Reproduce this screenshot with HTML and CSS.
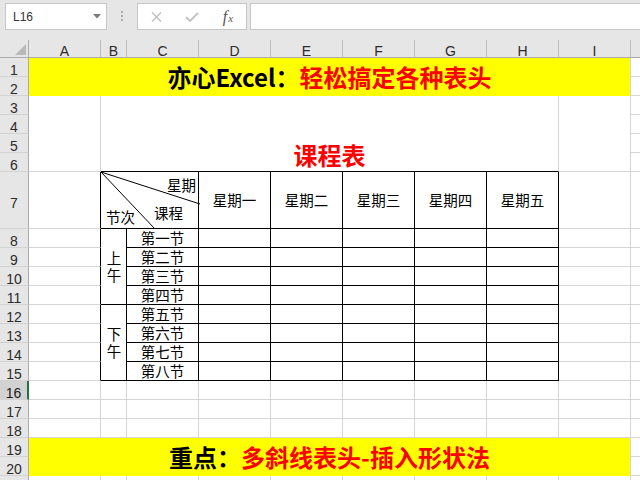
FILE: index.html
```html
<!DOCTYPE html>
<html lang="zh">
<head>
<meta charset="utf-8">
<title>课程表</title>
<link rel="stylesheet" href="styles.css">
</head>
<body>
<div class="fbar">
  <div class="namebox"><span>L16</span><svg class="dd" width="8" height="5" viewBox="0 0 8 5"><polygon points="0,0 8,0 4,4.5" fill="#7a7a7a"/></svg></div>
  <div class="grip"><svg width="3" height="12" viewBox="0 0 3 12"><rect x="0" y="0" width="2" height="2" fill="#ababab"/><rect x="0" y="4" width="2" height="2" fill="#ababab"/><rect x="0" y="8" width="2" height="2" fill="#ababab"/></svg></div>
  <div class="btns">
    <span class="slot"><svg width="11" height="10" viewBox="0 0 11 10"><path d="M1 0.5 L10 9.5 M10 0.5 L1 9.5" stroke="#bdbdbd" stroke-width="1.3" fill="none"/></svg></span>
    <span class="slot"><svg width="14" height="10" viewBox="0 0 14 10"><path d="M1 5 L5 9 L13 1" stroke="#c4c4c4" stroke-width="2" fill="none"/></svg></span>
    <span class="slot fx"><i class="f">f</i><i class="x">x</i></span>
  </div>
  <div class="input"></div>
</div>
<div class="sheet">
  <div class="corner"><svg width="28" height="17" viewBox="0 0 28 17"><polygon points="15,15 26,15 26,4" fill="#b9b9b9"/></svg></div>
  <div class="ch">A</div><div class="ch">B</div><div class="ch">C</div><div class="ch">D</div><div class="ch">E</div><div class="ch">F</div><div class="ch">G</div><div class="ch">H</div><div class="ch">I</div><div class="ch"></div>

  <div class="rh">1</div><div class="title"><span class="k">亦心Excel：</span><span class="r">轻松搞定各种表头</span></div><div class="c"></div>
  <div class="rh">2</div><div class="c"></div>

  <div class="rh">3</div><div class="c m4"></div><div class="caption">课程表</div><div class="c m4"></div><div class="c"></div>
  <div class="rh">4</div><div class="c"></div>
  <div class="rh">5</div><div class="c"></div>
  <div class="rh">6</div><div class="c"></div>

  <div class="rh">7</div><div class="c ar"></div>
  <div class="tb diag">
    <svg class="lines" width="98" height="57" viewBox="0 0 98 57"><line x1="0" y1="0" x2="99" y2="32" stroke="#000" stroke-width="1"/><line x1="0" y1="0" x2="54" y2="57" stroke="#000" stroke-width="1"/></svg>
    <span class="dtop">星期</span>
    <div class="dbot"><span class="jc">节次</span><span class="kc">课程</span></div>
  </div>
  <div class="tb">星期一</div><div class="tb">星期二</div><div class="tb">星期三</div><div class="tb">星期四</div><div class="tb">星期五</div><div class="c"></div><div class="c"></div>

  <div class="rh">8</div><div class="c ar"></div><div class="tb m4"><span class="vt">上午</span></div><div class="tb">第一节</div><div class="tb"></div><div class="tb"></div><div class="tb"></div><div class="tb"></div><div class="tb"></div><div class="c"></div><div class="c"></div>
  <div class="rh">9</div><div class="c ar"></div><div class="tb">第二节</div><div class="tb"></div><div class="tb"></div><div class="tb"></div><div class="tb"></div><div class="tb"></div><div class="c"></div><div class="c"></div>
  <div class="rh">10</div><div class="c ar"></div><div class="tb">第三节</div><div class="tb"></div><div class="tb"></div><div class="tb"></div><div class="tb"></div><div class="tb"></div><div class="c"></div><div class="c"></div>
  <div class="rh">11</div><div class="c ar"></div><div class="tb">第四节</div><div class="tb"></div><div class="tb"></div><div class="tb"></div><div class="tb"></div><div class="tb"></div><div class="c"></div><div class="c"></div>
  <div class="rh">12</div><div class="c ar"></div><div class="tb m4"><span class="vt">下午</span></div><div class="tb">第五节</div><div class="tb"></div><div class="tb"></div><div class="tb"></div><div class="tb"></div><div class="tb"></div><div class="c"></div><div class="c"></div>
  <div class="rh">13</div><div class="c ar"></div><div class="tb">第六节</div><div class="tb"></div><div class="tb"></div><div class="tb"></div><div class="tb"></div><div class="tb"></div><div class="c"></div><div class="c"></div>
  <div class="rh">14</div><div class="c ar"></div><div class="tb">第七节</div><div class="tb"></div><div class="tb"></div><div class="tb"></div><div class="tb"></div><div class="tb"></div><div class="c"></div><div class="c"></div>
  <div class="rh">15</div><div class="c ar"></div><div class="tb">第八节</div><div class="tb"></div><div class="tb"></div><div class="tb"></div><div class="tb"></div><div class="tb"></div><div class="c"></div><div class="c"></div>

  <div class="rh sel">16</div><div class="c"></div><div class="c"></div><div class="c"></div><div class="c"></div><div class="c"></div><div class="c"></div><div class="c"></div><div class="c"></div><div class="c"></div><div class="c"></div>
  <div class="rh">17</div><div class="c"></div><div class="c"></div><div class="c"></div><div class="c"></div><div class="c"></div><div class="c"></div><div class="c"></div><div class="c"></div><div class="c"></div><div class="c"></div>
  <div class="rh">18</div><div class="c"></div><div class="c"></div><div class="c"></div><div class="c"></div><div class="c"></div><div class="c"></div><div class="c"></div><div class="c"></div><div class="c"></div><div class="c"></div>

  <div class="rh">19</div><div class="title"><span class="k">重点：</span><span class="r">多斜线表头-插入形状法</span></div><div class="c"></div>
  <div class="rh">20</div><div class="c"></div>
  <div class="rh"></div><div class="c"></div><div class="c"></div><div class="c"></div><div class="c"></div><div class="c"></div><div class="c"></div><div class="c"></div><div class="c"></div><div class="c"></div><div class="c"></div>
</div>
</body>
</html>
```

FILE: styles.css
```css
* { box-sizing: border-box; }
html, body { margin: 0; padding: 0; }
body {
  width: 640px;
  height: 480px;
  overflow: hidden;
  background: #ffffff;
  font-family: "Liberation Sans", Arial, sans-serif;
}

/* formula bar */
.fbar {
  height: 40px;
  background: #e6e6e6;
  display: flex;
  align-items: flex-start;
  padding-top: 3px;
  overflow: hidden;
}
.namebox {
  margin-left: 5px;
  width: 102px;
  height: 27px;
  background: #fff;
  border: 1px solid #c6c6c6;
  display: flex;
  align-items: center;
  justify-content: space-between;
  padding: 0 5px 0 7px;
  font-size: 12px;
  color: #333;
}
.grip {
  width: 30px;
  height: 27px;
  padding-left: 14px;
  display: flex;
  align-items: center;
}
.btns {
  width: 110px;
  height: 27px;
  background: #fff;
  border: 1px solid #c6c6c6;
  display: flex;
  align-items: center;
}
.slot {
  width: 36px;
  display: flex;
  justify-content: center;
  align-items: center;
}
.fx {
  font-family: "Liberation Serif", "DejaVu Serif", serif;
  color: #555;
  align-items: baseline;
}
.fx .f { font-size: 16px; }
.fx .x { font-size: 11px; margin-left: 1px; }
.input {
  margin-left: 3px;
  flex: 1;
  height: 27px;
  background: #fff;
  border: 1px solid #c6c6c6;
  border-right: none;
}

/* sheet grid */
.sheet {
  display: grid;
  width: 640px;
  height: 440px;
  overflow: hidden;
  grid-template-columns: 29px 72px 26px 72px 72px 72px 72px 72px 72px 72px 72px;
  grid-template-rows: 18px repeat(6, 19px) 57px repeat(14, 19px);
  font-family: "Noto Sans CJK SC", "Liberation Sans", sans-serif;
  font-size: 14.5px;
  color: #000;
}
.corner {
  background: #e6e6e6;
  border-right: 1px solid #ababab;
  border-bottom: 1px solid #ababab;
}
.corner svg { display: block; }
.ch {
  background: #e6e6e6;
  border-right: 1px solid #bcbcbc;
  border-bottom: 1px solid #ababab;
  display: flex;
  justify-content: center;
  align-items: center;
  padding-top: 4px;
  font-family: "Liberation Sans", Arial, sans-serif;
  font-size: 14px;
  line-height: 16px;
  color: #2b2b2b;
}
.rh {
  background: #e6e6e6;
  border-right: 1px solid #ababab;
  border-bottom: 1px solid #d2d2d2;
  display: flex;
  justify-content: center;
  align-items: center;
  padding-top: 5px;
  font-family: "Liberation Sans", Arial, sans-serif;
  font-size: 14px;
  line-height: 16px;
  color: #2b2b2b;
}
.rh.sel {
  background: #d2d2d2;
  border-right: 2px solid #217346;
  color: #1a1a1a;
}
.c {
  border-right: 1px solid #d4d4d4;
  border-bottom: 1px solid #d4d4d4;
}
.m4 { grid-row: span 4; }
.ar { border-right-color: #000; }

.title {
  grid-column: span 9;
  grid-row: span 2;
  background: #ffff00;
  border-right: 1px solid #d4d4d4;
  border-bottom: 1px solid #ffff00;
  display: flex;
  justify-content: center;
  align-items: center;
  font-size: 24px;
  line-height: 26px;
  font-weight: 700;
}
.k { color: #000; }
.r { color: #ff0000; }

.caption {
  grid-column: span 7;
  grid-row: span 4;
  border-right: 1px solid #d4d4d4;
  border-bottom: 1px solid #000;
  display: flex;
  justify-content: center;
  align-items: flex-end;
  padding-bottom: 4px;
  font-size: 24px;
  line-height: 24px;
  font-weight: 700;
  color: #ff0000;
}

.tb {
  border-right: 1px solid #000;
  border-bottom: 1px solid #000;
  display: flex;
  justify-content: center;
  align-items: center;
  line-height: 18px;
  white-space: nowrap;
}
.vt {
  writing-mode: vertical-rl;
  letter-spacing: 3px;
  line-height: 16px;
  padding-top: 3px;
}

.diag {
  grid-column: span 2;
  position: relative;
  flex-direction: column;
  justify-content: flex-start;
  align-items: stretch;
  padding: 4px 2px 0 5px;
}
.diag .lines {
  position: absolute;
  left: 0;
  top: 0;
  overflow: visible;
}
.dtop { align-self: flex-end; }
.dbot {
  display: flex;
  align-items: flex-start;
  margin-top: 10px;
}
.jc { margin-top: 4px; }
.kc { margin-left: 19px; }
```
